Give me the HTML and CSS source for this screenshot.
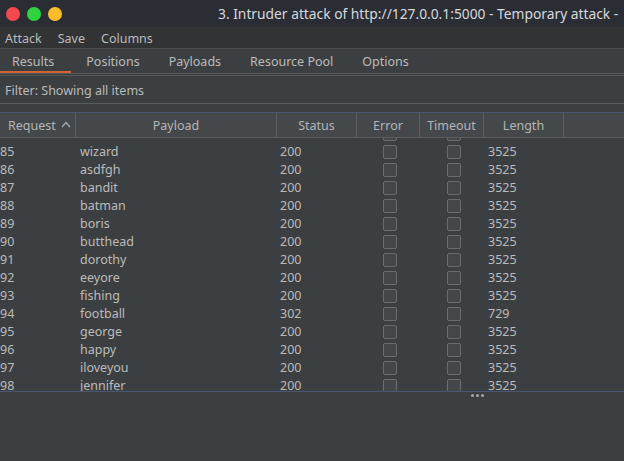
FILE: index.html
```html
<!DOCTYPE html>
<html>
<head>
<meta charset="utf-8">
<link rel="stylesheet" href="styles.css">
</head>
<body>
<div class="window">
  <div class="titlebar">
    <div class="lights">
      <span class="light red"></span>
      <span class="light green"></span>
      <span class="light yellow"></span>
    </div>
    <div class="title">3. Intruder attack of http://127.0.0.1:5000 - Temporary attack -</div>
  </div>
  <div class="menubar">
    <span class="menu-item">Attack</span>
    <span class="menu-item">Save</span>
    <span class="menu-item">Columns</span>
  </div>
  <div class="tabs">
    <span class="tab active">Results</span>
    <span class="tab">Positions</span>
    <span class="tab">Payloads</span>
    <span class="tab">Resource Pool</span>
    <span class="tab">Options</span>
  </div>
  <div class="filter">Filter: Showing all items</div>
  <div class="table">
    <div class="thead">
      <div class="th th-left">Request <svg class="chev" width="10" height="7" viewBox="0 0 10 7"><path d="M1 6 L5 1.5 L9 6" fill="none" stroke="#a9acae" stroke-width="1.2"/></svg></div>
      <div class="th">Payload</div>
      <div class="th">Status</div>
      <div class="th">Error</div>
      <div class="th">Timeout</div>
      <div class="th">Length</div>
      <div class="th th-last"></div>
    </div>
    <div class="tbody">
      <div class="rows">
        <div class="row"><span class="c"></span><span class="c"></span><span class="c"></span><span class="c cb"><i></i></span><span class="c cb"><i></i></span><span class="c"></span></div>
        <div class="row"><span class="c">85</span><span class="c">wizard</span><span class="c">200</span><span class="c cb"><i></i></span><span class="c cb"><i></i></span><span class="c">3525</span></div>
        <div class="row"><span class="c">86</span><span class="c">asdfgh</span><span class="c">200</span><span class="c cb"><i></i></span><span class="c cb"><i></i></span><span class="c">3525</span></div>
        <div class="row"><span class="c">87</span><span class="c">bandit</span><span class="c">200</span><span class="c cb"><i></i></span><span class="c cb"><i></i></span><span class="c">3525</span></div>
        <div class="row"><span class="c">88</span><span class="c">batman</span><span class="c">200</span><span class="c cb"><i></i></span><span class="c cb"><i></i></span><span class="c">3525</span></div>
        <div class="row"><span class="c">89</span><span class="c">boris</span><span class="c">200</span><span class="c cb"><i></i></span><span class="c cb"><i></i></span><span class="c">3525</span></div>
        <div class="row"><span class="c">90</span><span class="c">butthead</span><span class="c">200</span><span class="c cb"><i></i></span><span class="c cb"><i></i></span><span class="c">3525</span></div>
        <div class="row"><span class="c">91</span><span class="c">dorothy</span><span class="c">200</span><span class="c cb"><i></i></span><span class="c cb"><i></i></span><span class="c">3525</span></div>
        <div class="row"><span class="c">92</span><span class="c">eeyore</span><span class="c">200</span><span class="c cb"><i></i></span><span class="c cb"><i></i></span><span class="c">3525</span></div>
        <div class="row"><span class="c">93</span><span class="c">fishing</span><span class="c">200</span><span class="c cb"><i></i></span><span class="c cb"><i></i></span><span class="c">3525</span></div>
        <div class="row"><span class="c">94</span><span class="c">football</span><span class="c">302</span><span class="c cb"><i></i></span><span class="c cb"><i></i></span><span class="c">729</span></div>
        <div class="row"><span class="c">95</span><span class="c">george</span><span class="c">200</span><span class="c cb"><i></i></span><span class="c cb"><i></i></span><span class="c">3525</span></div>
        <div class="row"><span class="c">96</span><span class="c">happy</span><span class="c">200</span><span class="c cb"><i></i></span><span class="c cb"><i></i></span><span class="c">3525</span></div>
        <div class="row"><span class="c">97</span><span class="c">iloveyou</span><span class="c">200</span><span class="c cb"><i></i></span><span class="c cb"><i></i></span><span class="c">3525</span></div>
        <div class="row"><span class="c">98</span><span class="c">jennifer</span><span class="c">200</span><span class="c cb"><i></i></span><span class="c cb"><i></i></span><span class="c">3525</span></div>
      </div>
    </div>
  </div>
  <div class="splitter"><span class="dot"></span><span class="dot"></span><span class="dot"></span></div>
  <div class="lower"></div>
</div>
</body>
</html>
```
FILE: styles.css
```css
* { box-sizing: border-box; }
html, body { margin: 0; padding: 0; }
body {
  width: 624px;
  height: 461px;
  overflow: hidden;
  background: #3c3f41;
  font-family: "Noto Sans", "Open Sans", sans-serif;
  font-size: 12.5px;
  color: #bbbbbb;
}
.window { display: flex; flex-direction: column; height: 461px; }
.titlebar {
  height: 27px;
  background: #2b2d35;
  display: flex;
  align-items: center;
  flex-shrink: 0;
  overflow: hidden;
}
.lights { display: flex; gap: 7px; padding-left: 6px; width: 218px; flex-shrink: 0; }
.light { width: 14px; height: 14px; border-radius: 50%; display: block; }
.red { background: #f4484f; }
.green { background: #2ed33f; }
.yellow { background: #f9bd2b; }
.title {
  white-space: nowrap;
  color: #d6d8dc;
  font-size: 13.8px;
  padding-bottom: 1px;
}
.menubar {
  height: 22px;
  background: #313335;
  border-bottom: 1px solid #4b4d4f;
  display: flex;
  align-items: center;
  padding-top: 2px;
  flex-shrink: 0;
}
.menu-item { margin-left: 5px; margin-right: 11px; }
.tabs {
  height: 25px;
  display: flex;
  align-items: stretch;
  border-bottom: 1px solid #55585a;
  flex-shrink: 0;
}
.tab {
  display: flex;
  align-items: center;
  padding: 3px 14px 0 15px;
  border-bottom: 2px solid transparent;
}
.tab.active { border-bottom-color: #d0652f; padding: 3px 17px 0 12px; }
.filter {
  margin-top: 1px;
  height: 29px;
  border-top: 1px solid #55585a;
  border-bottom: 1px solid #5a5d5f;
  display: flex;
  align-items: center;
  padding-left: 5px;
  padding-top: 2px;
  flex-shrink: 0;
}
.table { margin-top: 8px; flex-shrink: 0; }
.thead {
  display: grid;
  grid-template-columns: 76px 201px 80px 63px 64px 80px 1fr;
  height: 26px;
  border-top: 1px solid #4a5674;
  border-bottom: 1px solid #5a5d5f;
  background: #45484a;
}
.th {
  display: flex;
  align-items: center;
  justify-content: center;
  border-right: 1px solid #5c5f61;
  color: #b2b5b7;
}
.th-left { justify-content: flex-start; padding-left: 8px; gap: 5px; }
.th-last { border-right: none; }
.chev { margin-top: -1px; }
.tbody {
  height: 254px;
  overflow: hidden;
  border-bottom: 1px solid #4a5674;
}
.rows { margin-top: -13px; }
.row {
  display: grid;
  grid-template-columns: 76px 201px 80px 63px 64px 80px 1fr;
  height: 18px;
  align-items: center;
}
.c { white-space: nowrap; padding-left: 0; line-height: 18px; }
.row .c:nth-child(2) { padding-left: 4px; }
.row .c:nth-child(3) { padding-left: 3px; }
.row .c:nth-child(6) { padding-left: 4px; }
.cb { display: flex; align-items: center; }
.row .c:nth-child(4) { padding-left: 26px; }
.row .c:nth-child(5) { padding-left: 27px; }
.cb i {
  display: block;
  width: 14px;
  height: 14px;
  border: 1px solid #6b6e70;
  border-radius: 2px;
  background: #43474a;
}
.splitter {
  display: flex;
  justify-content: flex-start;
  gap: 2px;
  padding-left: 471px;
  height: 6px;
  align-items: center;
  flex-shrink: 0;
}
.dot { width: 3px; height: 3px; border-radius: 50%; background: #a6a8aa; display: block; }
.lower { flex: 1; }
```
